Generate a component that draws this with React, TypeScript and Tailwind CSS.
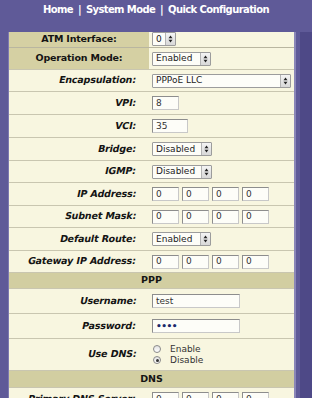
import React from "react";

const font = "font-['DejaVu_Sans',sans-serif]";

function Arrows() {
  return (
    <svg width="5" height="8" viewBox="0 0 5 8">
      <path d="M2.5 0.5 L4.5 3.3 L0.5 3.3 Z" fill="#222" />
      <path d="M2.5 7.5 L4.5 4.7 L0.5 4.7 Z" fill="#222" />
    </svg>
  );
}

function Select({ value, w }: { value: string; w: string }) {
  return (
    <div
      className={`${w} h-[14px] flex items-center border border-[#9c9c9c] bg-[#fdfdf8] rounded-[1px]`}
    >
      <span className={`flex-1 pl-[3px] text-[9px] leading-none text-[#222] ${font}`}>{value}</span>
      <span className="w-[10px] h-full flex items-center justify-center border-l border-[#b4b4b4] bg-gradient-to-b from-[#f4f4f4] to-[#d8d8d8]">
        <Arrows />
      </span>
    </div>
  );
}

function Input({ value, w }: { value: string; w: string }) {
  return (
    <div
      className={`${w} h-[14px] flex items-center border border-[#8d8d8d] border-r-[#c8c8c8] border-b-[#c8c8c8] bg-[#fdfdf8] pl-[3px] text-[9px] leading-none text-[#333] ${font}`}
    >
      {value}
    </div>
  );
}

function Ip() {
  return (
    <div className="flex gap-[3px]">
      <Input value="0" w="w-[27px]" />
      <Input value="0" w="w-[27px]" />
      <Input value="0" w="w-[27px]" />
      <Input value="0" w="w-[27px]" />
    </div>
  );
}

function Row({ label, h, children }: { label: string; h: string; children: React.ReactNode }) {
  return (
    <div className={`${h} shrink-0 flex border-b border-[#c9c6b0] bg-[#f8f6e0]`}>
      <div
        className={`w-[140px] shrink-0 flex items-center justify-end pr-[13px] text-[9.5px] font-bold tracking-[-0.15px] text-[#141414] ${font}`}
      >
        <span className="inline-block -skew-x-12">{label}</span>
      </div>
      <div className="flex-1 flex items-center pl-[3px]">{children}</div>
    </div>
  );
}

function Band({ title, h }: { title: string; h: string }) {
  return (
    <div
      className={`${h} shrink-0 flex items-center justify-center bg-[#d2cea1] border-b border-[#c9c6b0] text-[9.5px] font-bold text-[#141414] ${font}`}
    >
      {title}
    </div>
  );
}

function Radio({ checked }: { checked?: boolean }) {
  return (
    <span className="w-[8px] h-[8px] rounded-full border border-[#8a8a8a] bg-gradient-to-b from-[#e2e2e2] to-[#ffffff] flex items-center justify-center">
      {checked && <span className="w-[3px] h-[3px] rounded-full bg-[#333]" />}
    </span>
  );
}

export default function App() {
  return (
    <div className="w-[312px] h-[398px] overflow-hidden bg-[#5f5a98] flex flex-col">
      <div
        className={`h-[32px] shrink-0 flex justify-center pt-[2px] text-[10px] font-bold text-white tracking-[-0.6px] ${font}`}
      >
        <span>
          Home <span className="mx-[2px]">|</span> System Mode <span className="mx-[2px]">|</span> Quick Configuration
        </span>
      </div>
      <div className="flex flex-1 min-h-0">
        <div className="w-[9px] shrink-0 border-r border-[#7d79b0]" />
        <div className="w-[285px] shrink-0 flex flex-col">
          <div className="h-[16px] shrink-0 flex border-b border-[#b9b6a0] bg-[#f8f6e0]">
            <div
              className={`w-[140px] shrink-0 flex items-center justify-center bg-[#d5d0a3] text-[9.5px] font-bold tracking-[-0.2px] text-[#141414] ${font}`}
            >
              ATM Interface:
            </div>
            <div className="flex-1 flex items-start pl-[3px]">
              <Select value="0" w="w-[24px]" />
            </div>
          </div>
          <div className="h-[22px] shrink-0 flex border-b border-[#c9c6b0] bg-[#f8f6e0]">
            <div
              className={`w-[140px] shrink-0 flex items-center justify-center bg-[#d5d0a3] text-[9.5px] font-bold tracking-[-0.2px] text-[#141414] ${font}`}
            >
              Operation Mode:
            </div>
            <div className="flex-1 flex items-center pl-[3px]">
              <Select value="Enabled" w="w-[59px]" />
            </div>
          </div>
          <Row label="Encapsulation:" h="h-[22px]">
            <Select value="PPPoE LLC" w="w-[139px]" />
          </Row>
          <Row label="VPI:" h="h-[23px]">
            <Input value="8" w="w-[27px]" />
          </Row>
          <Row label="VCI:" h="h-[23px]">
            <Input value="35" w="w-[36px]" />
          </Row>
          <Row label="Bridge:" h="h-[23px]">
            <Select value="Disabled" w="w-[60px]" />
          </Row>
          <Row label="IGMP:" h="h-[22px]">
            <Select value="Disabled" w="w-[60px]" />
          </Row>
          <Row label="IP Address:" h="h-[23px]">
            <Ip />
          </Row>
          <Row label="Subnet Mask:" h="h-[22px]">
            <Ip />
          </Row>
          <Row label="Default Route:" h="h-[23px]">
            <Select value="Enabled" w="w-[59px]" />
          </Row>
          <Row label="Gateway IP Address:" h="h-[22px]">
            <Ip />
          </Row>
          <Band title="PPP" h="h-[16px]" />
          <Row label="Username:" h="h-[25px]">
            <Input value="test" w="w-[88px]" />
          </Row>
          <Row label="Password:" h="h-[25px]">
            <div
              className={`w-[88px] h-[14px] flex items-center border border-[#8d8d8d] border-r-[#c8c8c8] border-b-[#c8c8c8] bg-[#fdfdf8] pl-[3px] text-[9px] font-bold leading-none tracking-[-0.5px] text-[#1b2a6b] ${font}`}
            >
              ••••
            </div>
          </Row>
          <Row label="Use DNS:" h="h-[32px]">
            <div className={`flex flex-col gap-[1px] text-[9px] leading-[10px] text-[#333] ${font}`}>
              <label className="flex items-center gap-[9px] pl-[1px]">
                <Radio /> Enable
              </label>
              <label className="flex items-center gap-[9px] pl-[1px]">
                <Radio checked /> Disable
              </label>
            </div>
          </Row>
          <Band title="DNS" h="h-[17px]" />
          <Row label="Primary DNS Server:" h="h-[23px]">
            <Ip />
          </Row>
        </div>
        <div className="w-[2px] shrink-0 bg-[#8a86b8]" />
        <div className="w-[4px] shrink-0" />
        <div className="flex-1 bg-[#4e4987]" />
      </div>
    </div>
  );
}
